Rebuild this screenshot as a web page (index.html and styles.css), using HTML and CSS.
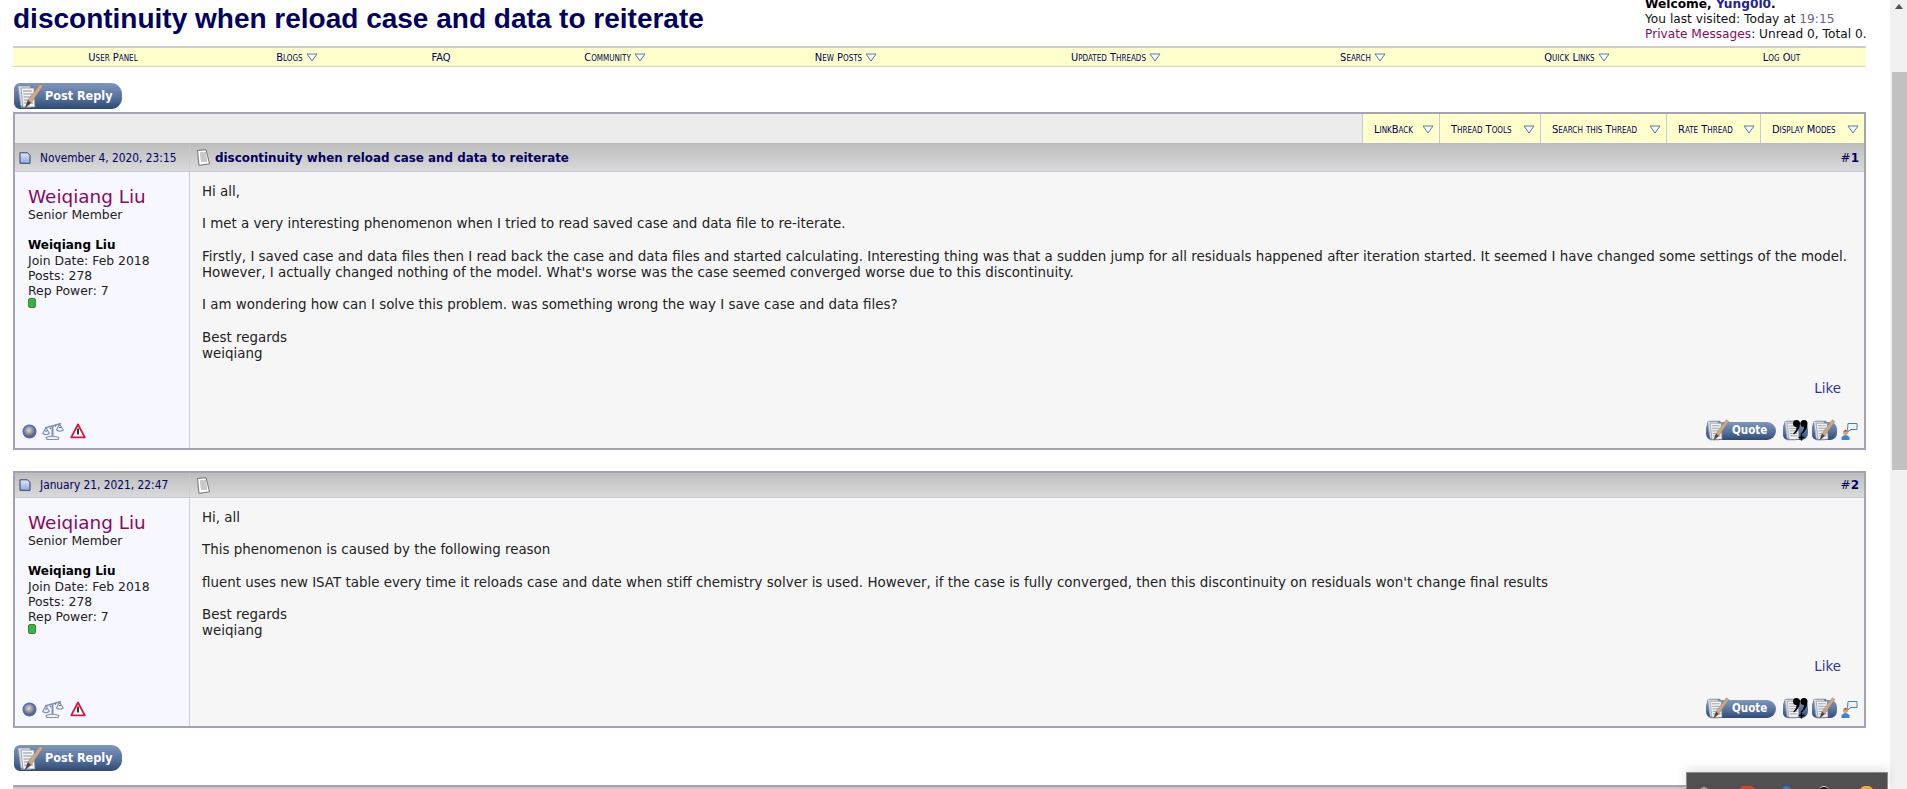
FILE: index.html
```html
<!DOCTYPE html>
<html lang="en">
<head>
<meta charset="utf-8">
<title>discontinuity when reload case and data to reiterate</title>
<link rel="stylesheet" href="styles.css">
</head>
<body>
<svg class="defs" width="0" height="0" aria-hidden="true">
  <defs>
    <radialGradient id="ball" cx=".45" cy=".4" r=".6"><stop offset="0" stop-color="#dcdcdc"/><stop offset=".7" stop-color="#74747c"/><stop offset="1" stop-color="#4a4a55"/></radialGradient>
    <linearGradient id="pageic" x1="0" y1="0" x2="0" y2="1"><stop offset="0" stop-color="#dfe8f6"/><stop offset="1" stop-color="#8fabd6"/></linearGradient>
    <symbol id="sheet" viewBox="0 0 30 26">
      <path d="M3 5 6 2h13l1 16-3 7H7z" fill="#6e88ae"/>
      <path d="M4 3h12l3 20H7z" fill="#dfe2e7" stroke="#8f96a0" stroke-width=".6"/>
      <path d="M7 5h13l1 19H9z" fill="#f4f5f7" stroke="#7c838e" stroke-width=".7"/>
      <path d="M9 8h9M9.300 11h9M9.600 14h9M9.900 17h9M10.200 20h9" stroke="#8b8f96" stroke-width="1"/>
    </symbol>
    <symbol id="pen" viewBox="0 0 30 26">
      <path d="M11 25 14 17 26 1l3 2-12 17z" fill="#cda988" stroke="#8c7159" stroke-width=".5"/>
      <path d="M11 25 14 17l3 3z" fill="#4d453d"/>
    </symbol>
    <symbol id="mq" viewBox="0 0 16 22">
      <path d="M4.500 1a3.500 3.500 0 0 1 3.500 3.500C8 9 6 12.500 2 15.500l-.8-.8C3.500 12.500 4.500 10.500 4.500 8A3.500 3.500 0 0 1 4.500 1zM12 1a3.500 3.500 0 0 1 3.500 3.500c0 4.500-2 8-6 11l-.8-.8C11 12.500 12 10.500 12 8a3.500 3.500 0 0 1 0-7z" fill="#000"/>
      <path d="M9.500 15.500v6M6.500 18.500h6" stroke="#000" stroke-width="1.500"/>
    </symbol>
    <symbol id="post" viewBox="0 0 15 17">
      <path d="M1.500 1.500 10 .8l3.500 14-10.500 1.500z" fill="#fff" stroke="#444" stroke-width=".7"/>
      <path d="M4 4h6M4 6h6M4.500 8h6M4.500 10h6.500M5 12h6" stroke="#888" stroke-width=".9"/>
    </symbol>
    <symbol id="mini" viewBox="0 0 12 12">
      <path d="M1 .8h7.500l2.500 2.500v8H1z" fill="url(#pageic)" stroke="#2d4178"/>
    </symbol>
    <symbol id="online" viewBox="0 0 15 15">
      <circle cx="7.500" cy="7.500" r="6.300" fill="url(#ball)" stroke="#4d6cc4" stroke-width="1.500"/>
    </symbol>
    <symbol id="scale" viewBox="0 0 22 18">
      <g stroke="#7f91b2" stroke-width="1.100" fill="#eef1f8" stroke-linejoin="round">
        <path d="M10.500 4v10" stroke-width="2"/>
        <path d="M4 15.500q6.500-2.500 13 0l-1 2H5z"/>
        <path d="M3 6 19 1.500" fill="none" stroke-width="1.400"/>
        <path d="M4 5.500 .7 11.500q3.300 2.500 6.600 0z"/>
        <path d="M17.500 2 14.500 8q3.300 2.500 6.800 0z"/>
        <path d="M3 9h2M17 5.500h2M8 6l1 1M13 3.500l1 1" stroke="#5d6f92"/>
      </g>
    </symbol>
    <symbol id="warn" viewBox="0 0 16 16">
      <path d="M8 1.500 14.800 14.300H1.200z" fill="#fff" stroke="#d9153f" stroke-width="1.800" stroke-linejoin="round"/>
      <path d="M8 5.500v6" stroke="#222" stroke-width="1.800"/>
    </symbol>
    <symbol id="person" viewBox="0 0 17 19">
      <path d="M6.500 7.500 7 1.500h9v6h-6l-3 2z" fill="#eef4fc" stroke="#4c7cc0"/>
      <circle cx="4.500" cy="10.500" r="2.500" fill="#e0a060"/>
      <path d="M2.500 9.500 4.500 7.500 7 9.500z" fill="#8a5a20"/>
      <path d="M.5 18v-2.500q1-2.500 4-2.500t4 2.500V18z" fill="#3d82d8"/>
    </symbol>
    <symbol id="tri" viewBox="0 0 12 9">
      <path d="M1 1h10L6 8z" fill="#f4f7fb" stroke="#5a7aa8"/>
    </symbol>
  </defs>
</svg>

<div class="page">
  <header class="top">
    <h1 class="title">discontinuity when reload case and data to reiterate</h1>
    <div class="welcome">
      <strong>Welcome, <a class="uname">Yung0l0</a>.</strong><br>
      You last visited: Today at <span class="time">19:15</span><br>
      <a class="pm">Private Messages</a>: Unread 0, Total 0.
    </div>
  </header>

  <nav class="nav">
    <a class="nav-item">User Panel</a>
    <a class="nav-item">Blogs <svg class="tri"><use href="#tri"/></svg></a>
    <a class="nav-item plain">FAQ</a>
    <a class="nav-item">Community <svg class="tri"><use href="#tri"/></svg></a>
    <a class="nav-item">New Posts <svg class="tri"><use href="#tri"/></svg></a>
    <a class="nav-item">Updated Threads <svg class="tri"><use href="#tri"/></svg></a>
    <a class="nav-item">Search <svg class="tri"><use href="#tri"/></svg></a>
    <a class="nav-item">Quick Links <svg class="tri"><use href="#tri"/></svg></a>
    <a class="nav-item">Log Out</a>
  </nav>

  <div class="actions first">
    <a class="btn-reply">
      <svg class="btn-icon"><use href="#sheet"/></svg><svg class="btn-icon"><use href="#pen"/></svg>
      <span class="btn-text">Post Reply</span>
    </a>
  </div>

  <section class="post">
    <div class="tools">
      <a class="tool t1">LinkBack <svg class="tri"><use href="#tri"/></svg></a>
      <a class="tool t2">Thread Tools <svg class="tri"><use href="#tri"/></svg></a>
      <a class="tool t3">Search this Thread <svg class="tri"><use href="#tri"/></svg></a>
      <a class="tool t4">Rate Thread <svg class="tri"><use href="#tri"/></svg></a>
      <a class="tool t5">Display Modes <svg class="tri"><use href="#tri"/></svg></a>
    </div>
    <div class="post-head head-a">
      <div class="date"><svg class="mini"><use href="#mini"/></svg>November 4, 2020, 23:15</div>
      <div class="subject"><svg class="doc"><use href="#post"/></svg><b>discontinuity when reload case and data to reiterate</b><a class="num">#<b>1</b></a></div>
    </div>
    <div class="post-body body-a">
      <aside class="user">
        <div class="user-info">
          <a class="name">Weiqiang Liu</a>
          <div>Senior Member</div>
          <div class="gap"><strong>Weiqiang Liu</strong></div>
          <div>Join Date: Feb 2018</div>
          <div>Posts: 278</div>
          <div>Rep Power: 7</div>
          <span class="rep"></span>
        </div>
        <div class="user-icons">
          <svg class="i-online"><use href="#online"/></svg>
          <svg class="i-scale"><use href="#scale"/></svg>
          <svg class="i-warn"><use href="#warn"/></svg>
        </div>
      </aside>
      <div class="content">
        <div class="message">
          Hi all,<br><br>
          I met a very interesting phenomenon when I tried to read saved case and data file to re-iterate.<br><br>
          Firstly, I saved case and data files then I read back the case and data files and started calculating. Interesting thing was that a sudden jump for all residuals happened after iteration started. It seemed I have changed some settings of the model. However, I actually changed nothing of the model. What's worse was the case seemed converged worse due to this discontinuity.<br><br>
          I am wondering how can I solve this problem. was something wrong the way I save case and data files?<br><br>
          Best regards<br>
          weiqiang
        </div>
        <div class="foot">
          <a class="like">Like</a>
          <div class="post-btns">
            <a class="btn-quote"><svg class="btn-icon q"><use href="#sheet"/></svg><svg class="btn-icon q"><use href="#pen"/></svg><span class="btn-text">Quote</span></a>
            <a class="btn-sq"><svg class="btn-icon q"><use href="#sheet"/></svg><svg class="mq"><use href="#mq"/></svg></a>
            <a class="btn-sq"><svg class="btn-icon q"><use href="#sheet"/></svg><svg class="btn-icon q"><use href="#pen"/></svg></a>
            <svg class="i-person"><use href="#person"/></svg>
          </div>
        </div>
      </div>
    </div>
  </section>

  <section class="post second">
    <div class="post-head head-b">
      <div class="date"><svg class="mini"><use href="#mini"/></svg>January 21, 2021, 22:47</div>
      <div class="subject"><svg class="doc"><use href="#post"/></svg><a class="num">#<b>2</b></a></div>
    </div>
    <div class="post-body body-b">
      <aside class="user">
        <div class="user-info">
          <a class="name">Weiqiang Liu</a>
          <div>Senior Member</div>
          <div class="gap"><strong>Weiqiang Liu</strong></div>
          <div>Join Date: Feb 2018</div>
          <div>Posts: 278</div>
          <div>Rep Power: 7</div>
          <span class="rep"></span>
        </div>
        <div class="user-icons">
          <svg class="i-online"><use href="#online"/></svg>
          <svg class="i-scale"><use href="#scale"/></svg>
          <svg class="i-warn"><use href="#warn"/></svg>
        </div>
      </aside>
      <div class="content">
        <div class="message">
          Hi, all<br><br>
          This phenomenon is caused by the following reason<br><br>
          fluent uses new ISAT table every time it reloads case and date when stiff chemistry solver is used. However, if the case is fully converged, then this discontinuity on residuals won't change final results<br><br>
          Best regards<br>
          weiqiang
        </div>
        <div class="foot">
          <a class="like">Like</a>
          <div class="post-btns">
            <a class="btn-quote"><svg class="btn-icon q"><use href="#sheet"/></svg><svg class="btn-icon q"><use href="#pen"/></svg><span class="btn-text">Quote</span></a>
            <a class="btn-sq"><svg class="btn-icon q"><use href="#sheet"/></svg><svg class="mq"><use href="#mq"/></svg></a>
            <a class="btn-sq"><svg class="btn-icon q"><use href="#sheet"/></svg><svg class="btn-icon q"><use href="#pen"/></svg></a>
            <svg class="i-person"><use href="#person"/></svg>
          </div>
        </div>
      </div>
    </div>
  </section>

  <div class="actions last">
    <a class="btn-reply">
      <svg class="btn-icon"><use href="#sheet"/></svg><svg class="btn-icon"><use href="#pen"/></svg>
      <span class="btn-text">Post Reply</span>
    </a>
  </div>
  <div class="next-table"></div>
</div>

<div class="scrollbar">
  <span class="arrow"></span>
  <span class="thumb"></span>
</div>

<div class="tray">
  <span class="tray-dot d1"></span>
  <span class="tray-dot d2"></span>
  <span class="tray-dot d3"></span>
  <span class="tray-dot d4"></span>
  <span class="tray-dot d5"></span>
</div>
</body>
</html>
```
FILE: styles.css
```css
* { box-sizing: border-box; }
html, body { margin: 0; height: 789px; overflow: hidden; background: #fff; }
body { font: 13px/16px "DejaVu Sans", Verdana, sans-serif; color: #111; }
.defs { position: absolute; }
a { color: inherit; text-decoration: none; }

.page { width: 1853px; margin-left: 13px; height: 789px; overflow: hidden; }

.top { display: flex; justify-content: space-between; height: 46px; }
.title { margin: 0; font: bold 28px/38px "Liberation Sans", Arial, sans-serif; color: #000060; }
.welcome { width: 221px; margin-top: -3px; font-size: 12.200px; line-height: 15px; white-space: nowrap; color: #111; }
.welcome strong { color: #000; }
.uname { color: #22229c; }
.time { color: #66668a; }
.pm { color: #8a0a5e; }

.nav { display: grid; grid-template-columns: 200px 168px 120px 228px 234px 306px 188px 240px 169px; height: 21px; padding-top: 1px; background: #ffffcc; border-top: 2px solid #cfcfcf; border-bottom: 1px solid #d6d6c0; }
.nav-item { display: flex; align-items: center; justify-content: center; gap: 3px; font: 400 11px/16px "DejaVu Sans", sans-serif; font-variant: small-caps; font-stretch: condensed; color: #000060; white-space: nowrap; }
.nav-item.plain { font-variant: normal; }
.tri { width: 12px; height: 9px; flex: none; }

.actions { display: flex; }
.first { height: 45px; padding-top: 16px; }
.last { height: 57px; padding-top: 17px; }

.btn-reply { position: relative; display: block; width: 108px; height: 26px; margin-left: 1px; border-radius: 6px 11px 11px 6px; background: linear-gradient(#7f97bc, #56719c 55%, #2f4a75); }
.btn-icon { position: absolute; left: 0; top: 0; width: 30px; height: 26px; }
.btn-text { position: absolute; left: 31px; top: 5px; font: bold 12.500px/15px "DejaVu Sans", sans-serif; font-stretch: condensed; color: #fff; white-space: nowrap; }

.post { border: 2px solid #a3a3b5; background: #f6f6f6; }
.second { margin-top: 21px; }
.tools { display: flex; justify-content: flex-end; height: 30px; background: #ececec; border-bottom: 1px solid #b9b9c4; }
.tool { display: flex; align-items: center; justify-content: space-between; padding: 2px 5px 0 11px; background: #ffffcc; border-left: 1px solid #c8c8dc; font: 400 11px/16px "DejaVu Sans", sans-serif; font-variant: small-caps; font-stretch: condensed; color: #000060; white-space: nowrap; }
.t1 { width: 77px; }
.t2 { width: 101px; }
.t3 { width: 126px; }
.t4 { width: 94px; }
.t5 { width: 104px; }

.post-head { display: flex; align-items: center; background: linear-gradient(#bdbdbd, #dadada); border-bottom: 1px solid #c8c8d8; color: #000060; }
.head-a { height: 28px; }
.head-b { height: 25px; }
.date { display: flex; align-items: center; width: 175px; height: 100%; padding-left: 4px; border-right: 1px solid #c8c8d2; font-size: 11.800px; font-stretch: condensed; white-space: nowrap; }
.mini { width: 12px; height: 12px; margin-right: 9px; flex: none; }
.subject { flex: 1; display: flex; align-items: center; height: 100%; padding-right: 5px; font-size: 11.900px; }
.subject b { font-weight: bold; }
.doc { width: 15px; height: 17px; margin: 0 4px 0 6px; flex: none; }
.num { margin-left: auto; font-size: 12px; }

.post-body { display: flex; }
.body-a { height: 276px; }
.body-b { height: 228px; }

.user { display: flex; flex-direction: column; justify-content: space-between; width: 175px; padding: 14px 10px 7px 7px; background: #f6f7ff; border-right: 1px solid #cfcfdc; font-size: 12.400px; line-height: 15px; color: #222; }
.user-info { margin-left: 6px; }
.user strong { color: #000; font-size: 12px; }
.name { display: block; font-size: 18.400px; line-height: 21px; color: #8a0a5e; }
.gap { margin-top: 15px; }
.rep { display: block; width: 8px; height: 10px; background: #34b83c; border: 1px solid #4a7a50; border-radius: 2px; }

.user-icons { display: flex; align-items: center; gap: 5px; margin-bottom: 1px; }
.i-online { width: 15px; height: 15px; }
.i-scale { width: 22px; height: 18px; }
.i-warn { width: 16px; height: 16px; margin-left: 1px; }

.content { flex: 1; display: flex; flex-direction: column; justify-content: space-between; padding: 12px 5px 6px 12px; font-size: 13.420px; line-height: 16.200px; color: #222; }
.foot { display: flex; flex-direction: column; align-items: flex-end; gap: 23px; }
.like { color: #33339c; margin-right: 18px; }
.post-btns { display: flex; align-items: center; gap: 4px; margin-right: 1px; height: 22px; }
.btn-quote { position: relative; display: block; width: 70px; height: 18px; margin-right: 3px; border-radius: 6px 9px 9px 6px; background: linear-gradient(#7f97bc, #56719c 55%, #2f4a75); }
.btn-icon.q { left: -2px; top: -3px; width: 26px; height: 22px; }
.btn-quote .btn-text { left: 26px; top: 1px; font-size: 11.500px; }
.btn-sq { position: relative; display: block; width: 25px; height: 18px; border-radius: 5px 7px 7px 5px; background: linear-gradient(#7f97bc, #56719c 55%, #2f4a75); }
.mq { position: absolute; left: 9px; top: -3px; width: 16px; height: 22px; }
.i-person { width: 17px; height: 19px; }

.next-table { height: 8px; background: #c8c8c8; border-top: 2px solid #a3a3b5; }

.scrollbar { position: fixed; top: 0; right: 0; bottom: 0; width: 17px; background: #f1f1f1; }
.arrow { position: absolute; left: 5px; top: 4px; border-left: 4px solid transparent; border-right: 4px solid transparent; border-bottom: 5px solid #505050; }
.thumb { position: absolute; left: 2px; right: 0; top: 72px; height: 398px; background: #c1c1c1; }

.tray { position: fixed; left: 1686px; top: 772px; width: 202px; height: 17px; background: #505050; border: 1px solid #8a8a8a; border-bottom: 0; box-shadow: 0 -3px 12px rgba(0, 0, 0, .12); }
.tray-dot { position: absolute; top: 13px; width: 16px; height: 16px; border-radius: 5px; }
.d1 { left: 13px; background: #9a9a9a; width: 8px; top: 14px; }
.d2 { left: 52px; background: #e8401a; }
.d3 { left: 94px; background: #1e7fe8; border-radius: 50%; width: 11px; }
.d4 { left: 132px; background: #111; width: 10px; border-top: 1px solid #ddd; }
.d5 { left: 173px; background: #f5a623; width: 13px; }
```
